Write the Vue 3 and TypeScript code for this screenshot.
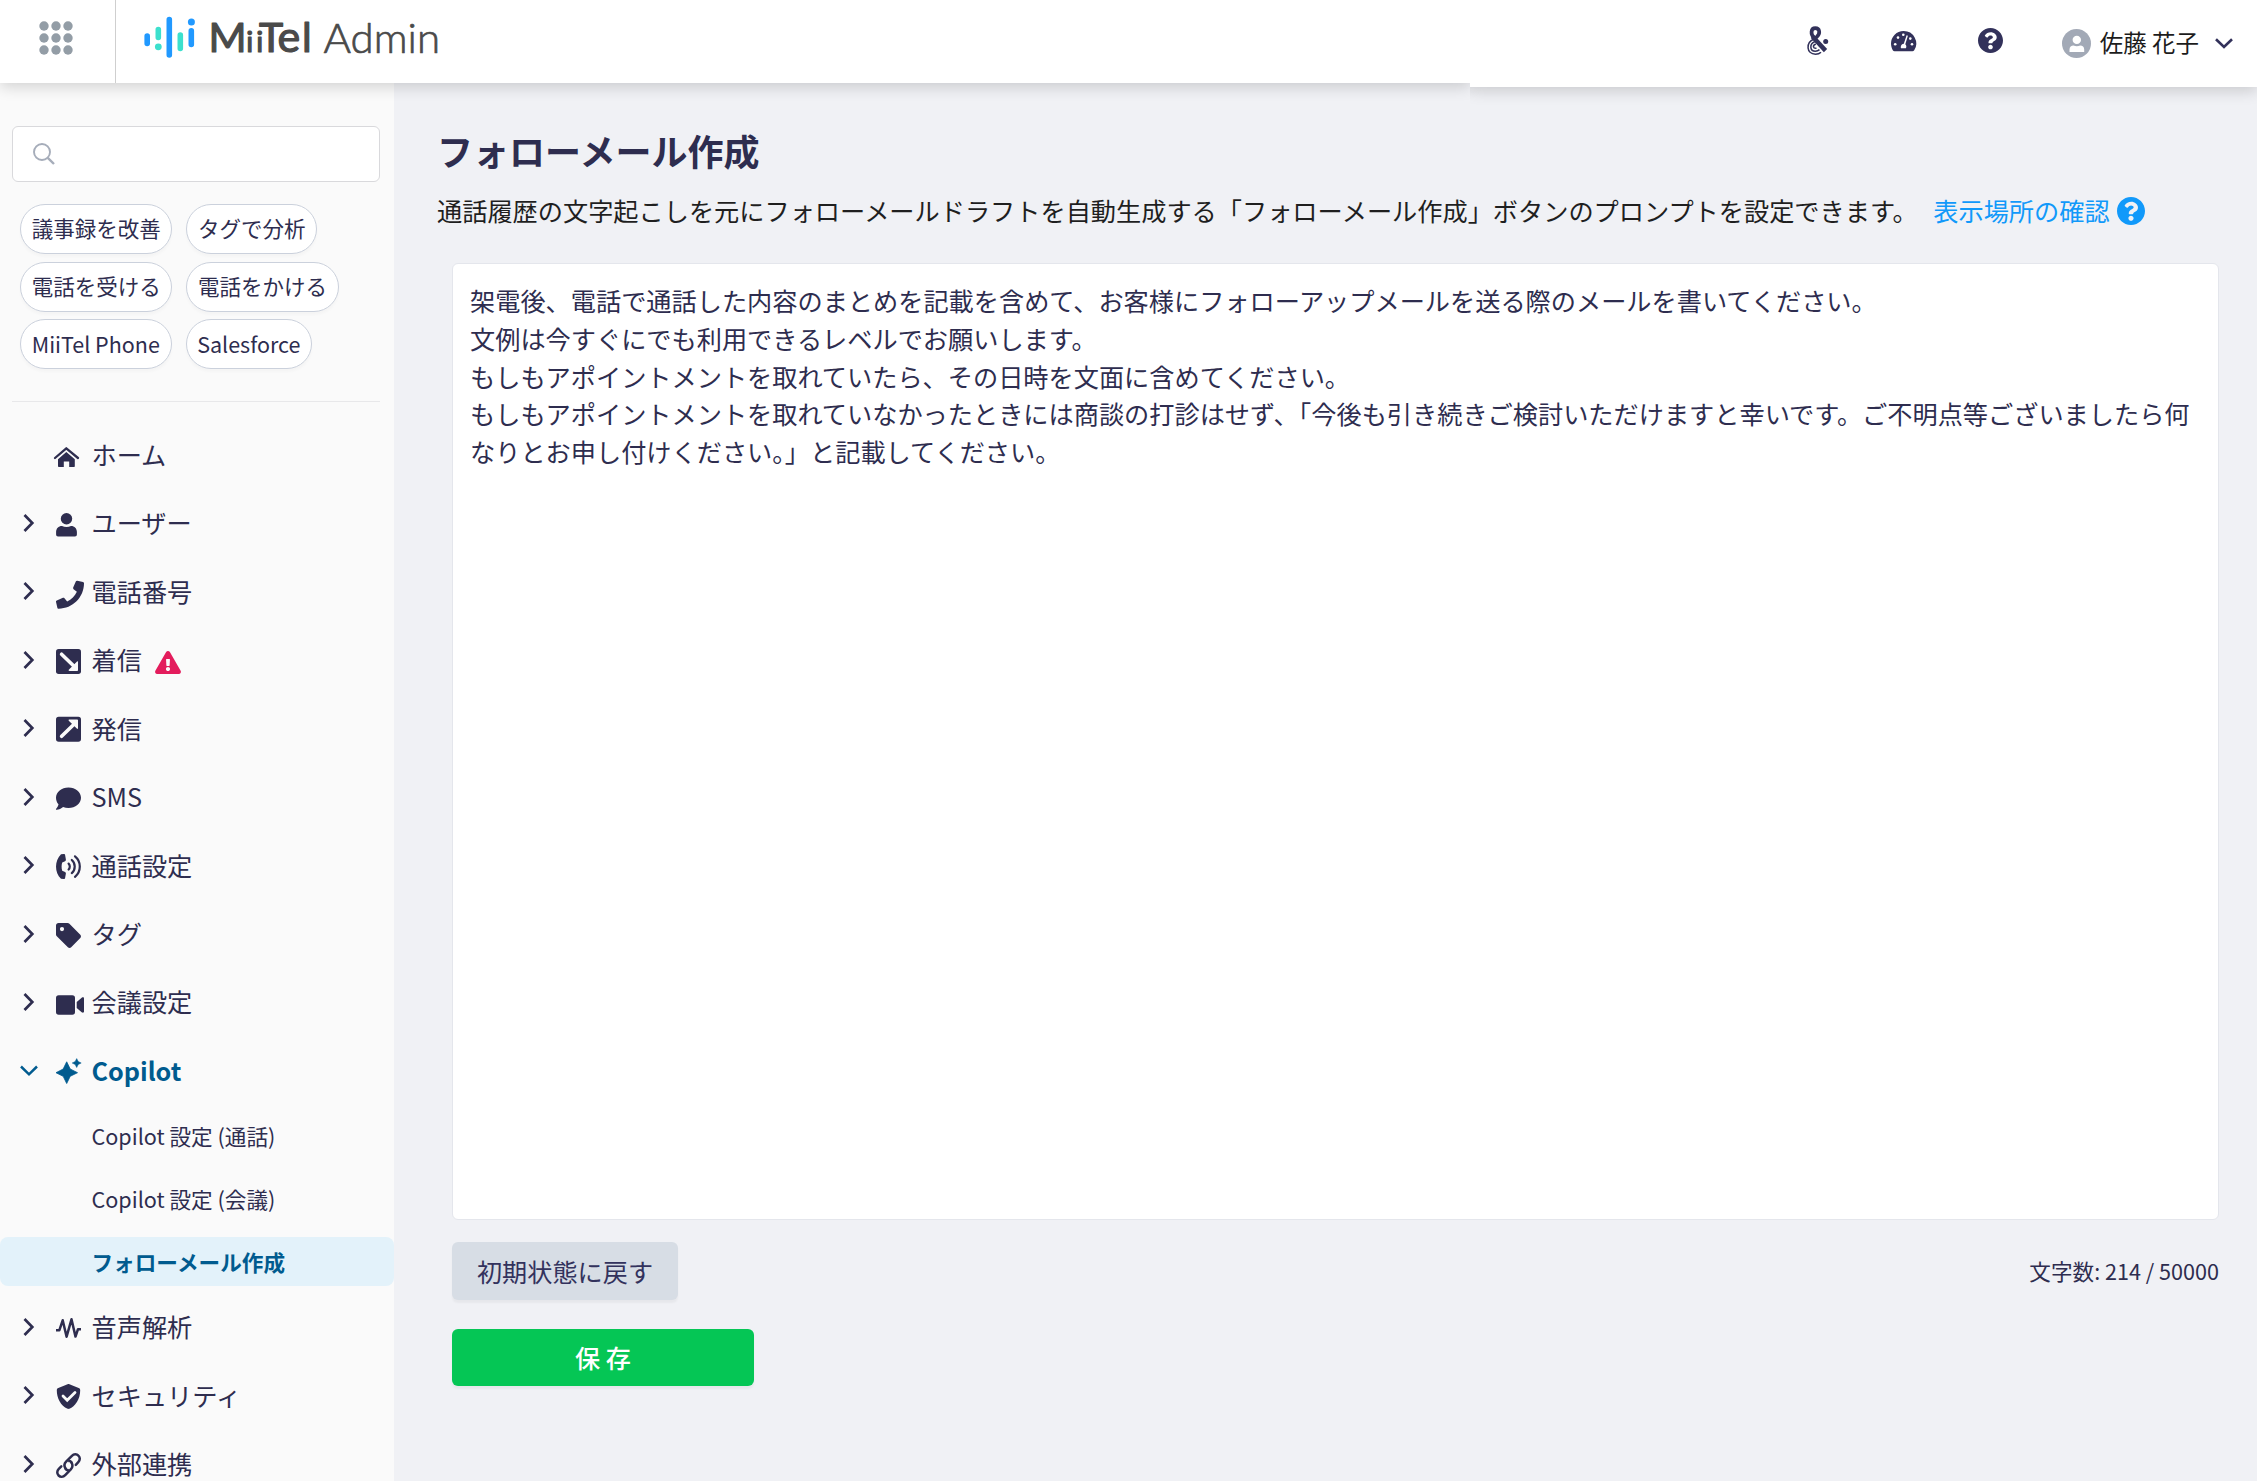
<script setup lang="ts">
import { ref, computed } from 'vue'

interface MenuItem {
  label: string
  icon: string
  leaf?: boolean
  alert?: boolean
  open?: boolean
  children?: string[]
}

const shortcuts: string[][] = [
  ['議事録を改善', 'タグで分析'],
  ['電話を受ける', '電話をかける'],
  ['MiiTel Phone', 'Salesforce'],
]

const menu: MenuItem[] = [
  { label: 'ホーム', icon: 'home', leaf: true },
  { label: 'ユーザー', icon: 'user' },
  { label: '電話番号', icon: 'phone' },
  { label: '着信', icon: 'incoming', alert: true },
  { label: '発信', icon: 'outgoing' },
  { label: 'SMS', icon: 'sms' },
  { label: '通話設定', icon: 'call' },
  { label: 'タグ', icon: 'tag' },
  { label: '会議設定', icon: 'video' },
  {
    label: 'Copilot',
    icon: 'sparkle',
    open: true,
    children: ['Copilot 設定 (通話)', 'Copilot 設定 (会議)', 'フォローメール作成'],
  },
  { label: '音声解析', icon: 'wave' },
  { label: 'セキュリティ', icon: 'shield' },
  { label: '外部連携', icon: 'link' },
]

const activeChild = 'フォローメール作成'
const keyword = ref('')
const maxLength = 50000
const initialPrompt = [
  '架電後、電話で通話した内容のまとめを記載を含めて、お客様にフォローアップメールを送る際のメールを書いてください。',
  '文例は今すぐにでも利用できるレベルでお願いします。',
  'もしもアポイントメントを取れていたら、その日時を文面に含めてください。',
  'もしもアポイントメントを取れていなかったときには商談の打診はせず、「今後も引き続きご検討いただけますと幸いです。ご不明点等ございましたら何なりとお申し付けください。」と記載してください。',
].join('\n')
const prompt = ref(initialPrompt)
const savedLength = ref(214)
const counter = computed(() => `文字数: ${savedLength.value} / ${maxLength}`)

function updateCount() {
  savedLength.value = prompt.value.length
}
function reset() {
  prompt.value = initialPrompt
}

const questionPath =
  'M504 256c0 136.997-111.043 248-248 248S8 392.997 8 256C8 119.083 119.043 8 256 8s248 111.083 248 248zM262.655 90c-54.497 0-89.255 22.957-116.549 63.758-3.536 5.286-2.353 12.415 2.715 16.258l34.699 26.31c5.205 3.947 12.621 3.008 16.665-2.122 17.864-22.658 30.113-35.797 57.303-35.797 20.429 0 45.698 13.148 45.698 32.958 0 14.976-12.363 22.667-32.534 33.976C247.128 238.528 216 254.941 216 296v4c0 6.627 5.373 12 12 12h56c6.627 0 12-5.373 12-12v-1.333c0-28.462 83.186-29.647 83.186-106.667 0-58.002-60.165-102-116.531-102zM256 338c-25.365 0-46 20.635-46 46 0 25.364 20.635 46 46 46s46-20.636 46-46c0-25.364-20.635-46-46-46z'
</script>

<template>
  <div class="app">
    <header class="header">
      <div class="brand">
        <button class="apps" aria-label="apps">
          <svg width="34" height="34" viewBox="0 0 34 34" fill="#939da6">
            <template v-for="r in 3" :key="r">
              <circle v-for="c in 3" :key="c" :cx="12 * c - 7" :cy="12 * r - 7" r="4.7" />
            </template>
          </svg>
        </button>
        <svg class="logo" width="310" height="50" viewBox="0 0 310 50">
          <g stroke-width="5.6" stroke-linecap="round">
            <path d="M7.200 26v7.500M29.300 9.500V45M51.300 20.700v13.800" stroke="#2199ff" />
            <path d="M18.300 19.500v8M40.300 25v13.500" stroke="#3ce0cd" />
          </g>
          <circle cx="51.400" cy="12" r="3.500" fill="#2199ff" />
          <circle cx="18.300" cy="36.800" r="3.400" fill="#3ce0cd" />
          <g font-family="Lato, sans-serif" fill="#4a4a4a" stroke="#4a4a4a" stroke-linejoin="round">
            <text font-size="41" y="42.400" stroke-width="1.200">
              <tspan x="68.500">M</tspan><tspan x="106.200" font-size="29">i</tspan><tspan x="116.200" font-size="29">i</tspan><tspan x="119.100">T</tspan><tspan x="137.500" font-size="43">e</tspan><tspan x="161.900">l</tspan>
            </text>
            <text x="183.500" y="42.500" font-size="41" font-weight="300" stroke-width="0.700" textLength="116.500" lengthAdjust="spacingAndGlyphs">Admin</text>
          </g>
        </svg>
      </div>
      <div class="tools">
        <svg class="amp" width="22" height="30" viewBox="0 0 22 30" fill="none" stroke="#32315a">
          <path d="M7 11.800C3.500 8.500 3.600 2.200 8.300 2.200C12.800 2.200 13.600 7.600 9.800 10.800L6.500 13.600" stroke-width="3.700" />
          <path d="M5.500 10.500L18.500 24.600" stroke-width="4.500" />
          <path d="M7 13C-1.500 16.500-.8 28.200 8.500 28.200C11 28.200 12.800 27.400 14 26.200M8 15.500C1.800 18 3 25.300 8.500 25.200C10.200 25.200 11.500 24.500 12.500 23.600M8.800 18C5.200 19.400 6 22.600 9.500 22.200" stroke-width="1.500" />
          <circle cx="18.700" cy="15.400" r="2.500" fill="#32315a" stroke="none" />
        </svg>
        <svg class="gauge" width="25" height="21" viewBox="0 0 25 21">
          <path d="M12.500 0A12.500 12.500 0 0 0 0 12.500C0 15 .7 17.400 1.800 19.300C2.200 20 2.800 20.300 3.500 20.300H21.500C22.200 20.300 22.800 20 23.200 19.300A12.500 12.500 0 0 0 12.500 0Z" fill="#32315a" />
          <g fill="#fff">
            <circle cx="7" cy="6.600" r="1.300" /><circle cx="12.300" cy="3.700" r="1.300" />
            <circle cx="19.300" cy="7.600" r="1.300" /><circle cx="4.200" cy="13.300" r="1.300" /><circle cx="21" cy="13.300" r="1.300" />
            <path d="M15.600 4.300L16.900 4.700L14.300 13.200C15.600 14.300 15.600 16 14.900 17.300H10.100C9.300 15.500 10.300 12.900 12.800 12.700Z" />
          </g>
        </svg>
        <svg class="help" width="25" height="25" viewBox="8 8 496 496" fill="#32315a"><path :d="questionPath" /></svg>
        <svg class="avatar" width="29" height="29" viewBox="0 0 29 29">
          <circle cx="14.500" cy="14.500" r="14.500" fill="#a2a9b6" />
          <circle cx="14.800" cy="10.900" r="4.200" fill="#fff" />
          <path d="M7.500 22.900V20.500C7.500 18 9.300 16.500 11.500 16.500C13.500 17.500 16.200 17.500 18.200 16.500C20.500 16.500 22.200 18 22.200 20.500V22.900Z" fill="#fff" />
        </svg>
        <span class="name">佐藤 花子</span>
        <svg width="18" height="11" viewBox="0 0 18 11" fill="none" stroke="#32315a" stroke-width="2.600"><path d="M1 1.200L9 9L17 1.200" /></svg>
      </div>
    </header>

    <div class="body">
      <aside class="sidebar">
        <label class="search">
          <svg width="22" height="22" viewBox="0 0 22 22" fill="none" stroke="#a6adba" stroke-width="1.900"><circle cx="9" cy="9" r="8" /><path d="M14.800 14.800L21 21" stroke-width="2.400" /></svg>
          <input v-model="keyword" type="text" aria-label="search" />
        </label>
        <div class="chips">
          <div v-for="(row, i) in shortcuts" :key="i" class="chip-row">
            <button v-for="chip in row" :key="chip" class="chip">{{ chip }}</button>
          </div>
        </div>
        <hr class="rule" />
        <nav>
          <template v-for="item in menu" :key="item.label">
            <div class="item" :class="{ open: item.open }">
              <span class="caret">
                <svg v-if="item.open" width="18" height="12" viewBox="0 0 18 12"><path d="M1 1.500L9 9.300L17 1.500" fill="none" stroke="currentColor" stroke-width="2.500" /></svg>
                <svg v-else-if="!item.leaf" class="right" width="12" height="18" viewBox="0 0 12 18"><path d="M1.500 1L9.300 9L1.500 17" fill="none" stroke="currentColor" stroke-width="2.700" /></svg>
              </span>
              <svg class="icon" width="30" height="28" viewBox="0 0 30 28" fill="currentColor">
                <template v-if="item.icon === 'home'">
                  <path d="M1 17L12.300 7.300L24 17" fill="none" stroke="currentColor" stroke-width="2.300" stroke-linecap="round" stroke-linejoin="round" />
                  <path d="M12.300 11L20.800 18.200V25C20.800 25.600 20.500 26 19.800 26H15.200V20.400H9.800V26H5.200C4.500 26 4 25.600 4 25V18.200Z" />
                </template>
                <template v-else-if="item.icon === 'user'">
                  <circle cx="12.500" cy="8.800" r="5.700" />
                  <path d="M8 15.900C10.700 17.300 14.300 17.300 17 15.900C20.600 15.900 22.900 18.400 22.900 22V24.400C22.900 25.500 22.100 26.400 21 26.400H4C2.900 26.400 2.100 25.500 2.100 24.400V22C2.100 18.400 4.400 15.900 8 15.900Z" />
                </template>
                <g v-else-if="item.icon === 'phone'" transform="translate(2 2.700) scale(.0547)">
                  <path d="M493.400 24.600l-104-24c-11.300-2.600-22.900 3.300-27.500 13.900l-48 112c-4.200 9.800-1.400 21.300 6.900 28l60.600 49.600c-36 76.700-98.900 140.500-177.200 177.200l-49.600-60.600c-6.800-8.300-18.200-11.100-28-6.900l-112 48C3.900 366.500-2 378.100.6 389.400l24 104C27.100 504.200 36.700 512 48 512c256.100 0 464-207.500 464-464 0-11.200-7.700-20.900-18.600-23.400z" />
                </g>
                <template v-else-if="item.icon === 'incoming'">
                  <rect x="2" y="2" width="25" height="25" rx="2.700" />
                  <path d="M7.600 7.200L19.500 18.800" stroke="#fafafa" stroke-width="3.600" stroke-linecap="round" />
                  <path d="M22.800 14.700C23.500 14 24 14.300 24 15.200V23.200C24 23.700 23.700 24 23.200 24H15.500C14.500 24 14.300 23.300 15 22.600Z" fill="#fafafa" />
                </template>
                <template v-else-if="item.icon === 'outgoing'">
                  <rect x="2" y="1.700" width="25" height="25" rx="2.700" />
                  <path d="M7.600 21.300L19.500 9.800" stroke="#fafafa" stroke-width="3.600" stroke-linecap="round" />
                  <path d="M22.800 13.500C23.500 14.200 24 13.900 24 13V5.300C24 4.800 23.700 4.500 23.200 4.500H15.500C14.500 4.500 14.300 5.200 15 5.900Z" fill="#fafafa" />
                </template>
                <path v-else-if="item.icon === 'sms'" d="M14.500 3.500C21.400 3.500 27 8.100 27 13.700C27 19.400 21.400 23.900 14.500 23.900C12.500 23.900 10.700 23.600 9.100 22.900C7.300 24.400 5 25.700 2.500 25.700C1.900 25.700 1.800 25.100 2.200 24.700C3.200 23.600 4.200 22 4.500 20.300C2.900 18.500 2 16.200 2 13.700C2 8.100 7.600 3.500 14.500 3.500Z" />
                <template v-else-if="item.icon === 'call'">
                  <path d="M7 2.200L9.800 2.100C10.500 2.100 11 2.500 11.100 3.100L11.900 7.600C12 8.300 11.700 8.900 11.100 9.200L8.200 10.500C7.400 13 7.400 16.200 8.200 18.700L11.100 20C11.700 20.300 12 20.900 11.900 21.600L11.100 26C11 26.700 10.500 27 9.800 27L7 26.800C.4 20.300.4 8.800 7 2.200Z" />
                  <path d="M14.600 11.600C16.200 13.200 16.200 15.900 14.600 17.500M17.800 8C21.700 11.300 21.700 17.800 17.800 21.100M21 4.300C27.400 9.400 27.400 19.700 21 24.800" fill="none" stroke="currentColor" stroke-width="2.200" stroke-linecap="round" />
                </template>
                <path v-else-if="item.icon === 'tag'" fill-rule="evenodd" d="M2 13.500V4.500C2 3.100 3.100 2 4.500 2H13.500C14.300 2 14.900 2.300 15.400 2.800L26.300 13.700C27.200 14.600 27.200 16.200 26.300 17.100L17.200 26.200C16.300 27.100 14.800 27.100 13.900 26.200L2.800 15.300C2.300 14.800 2 14.200 2 13.500ZM8 6A2.100 2.100 0 1 0 8 10.200A2.100 2.100 0 1 0 8 6Z" />
                <template v-else-if="item.icon === 'video'">
                  <rect x="2" y="6.200" width="19" height="19.500" rx="2.700" />
                  <path d="M22.700 12.900L27.700 8.700C28.800 7.900 30 8.200 30 9.300V22.600C30 23.700 28.800 24 27.700 23.200L22.700 19Z" />
                </template>
                <template v-else-if="item.icon === 'sparkle'">
                  <path d="M12.700 4.800L16.200 12L23.500 15.700L16.200 19.300L12.700 26.500L9.200 19.300L2 15.700L9.200 12Z" stroke="currentColor" stroke-linejoin="round" stroke-width=".8" />
                  <path d="M22.700 1.600L24.200 4.500L27.200 6L24.200 7.500L22.700 10.500L21.200 7.500L18.200 6L21.200 4.500Z" stroke="currentColor" stroke-linejoin="round" stroke-width=".5" />
                </template>
                <path v-else-if="item.icon === 'wave'" d="M2 16.200H5.400L8.700 6.300L12.600 22.700L17.500 5.300L21.500 22.600L24 15.200H27" fill="none" stroke="currentColor" stroke-width="2.500" stroke-linejoin="round" />
                <template v-else-if="item.icon === 'shield'">
                  <path d="M13.600 2.200C14.200 1.900 14.800 1.900 15.400 2.200L24.700 6C25.600 6.400 26.200 7.200 26.200 8.200C26.200 17.300 21 24.400 15.400 26.800C14.800 27 14.200 27 13.600 26.800C6.600 23.900 2.800 15.900 2.800 8.200C2.800 7.200 3.400 6.400 4.300 6Z" />
                  <path d="M9 14L13.200 18.200L21 10.400" fill="none" stroke="#fafafa" stroke-width="2.800" stroke-linecap="round" />
                </template>
                <g v-else fill="none" stroke="currentColor" stroke-width="2.500" stroke-linecap="round">
                  <path d="M17.400 11.400C19 14 18.600 16.600 16.800 18.400L11.200 24.200C9.200 26.200 6.300 26.200 4.600 24.500C2.800 22.700 2.800 19.900 4.800 17.900L7.300 15.300" />
                  <path d="M11.700 17.800C9.900 15.200 10.200 12.600 12.100 10.700L17.900 4.900C19.900 2.900 22.700 2.900 24.400 4.600C26.300 6.400 26.200 9.200 24.300 11.200L21.800 13.800" />
                  <path d="M15.300 10.100C16.500 9.800 17 10.700 17.400 11.400M13.800 19C12.700 19.300 12.100 18.500 11.700 17.800" />
                </g>
              </svg>
              <span class="label">{{ item.label }}</span>
              <svg v-if="item.alert" class="alert" width="26" height="23" viewBox="0 0 576 512"><path fill="#e31c5c" d="M569.517 440.013C587.975 472.007 564.806 512 527.940 512H48.054c-36.937 0-59.999-40.055-41.577-71.987L246.423 23.985c18.467-32.009 64.720-31.951 83.154 0l239.940 416.028zM288 354c-25.405 0-46 20.595-46 46s20.595 46 46 46 46-20.595 46-46-20.595-46-46-46zm-43.673-165.346l7.418 136c.347 6.364 5.609 11.346 11.982 11.346h48.546c6.373 0 11.635-4.982 11.982-11.346l7.418-136c.375-6.874-5.098-12.654-11.982-12.654h-63.383c-6.884 0-12.356 5.780-11.981 12.654z" /></svg>
            </div>
            <div v-if="item.children" class="children">
              <a v-for="child in item.children" :key="child" class="child" :class="{ active: child === activeChild }">{{ child }}</a>
            </div>
          </template>
        </nav>
      </aside>

      <main class="main">
        <h1>フォローメール作成</h1>
        <p class="desc">
          <span>通話履歴の文字起こしを元にフォローメールドラフトを自動生成する「フォローメール作成」ボタンのプロンプトを設定できます。</span>
          <a class="where">表示場所の確認<svg width="28" height="28" viewBox="8 8 496 496" fill="#1199fa"><path :d="questionPath" /></svg></a>
        </p>
        <div class="form">
          <textarea v-model="prompt" class="prompt" spellcheck="false" @input="updateCount"></textarea>
          <div class="meta">
            <button class="reset" @click="reset">初期状態に戻す</button>
            <span class="count">{{ counter }}</span>
          </div>
          <button class="save">保 存</button>
        </div>
      </main>
    </div>
  </div>
</template>

<style>
html,
body {
  margin: 0;
  overflow: hidden;
  background: #f0f1f5;
}
</style>

<style scoped>
.app {
  width: 2257px;
  height: 1481px;
  overflow: hidden;
  display: flex;
  flex-direction: column;
  font-family: 'Noto Sans CJK JP', sans-serif;
  font-size: 25.2px;
  color: #2e2d4f;
  background: #f0f1f5;
}
button,
input,
textarea {
  font-family: inherit;
  box-sizing: border-box;
}
svg {
  display: block;
  flex: none;
  overflow: visible;
}
.header {
  height: 83px;
  flex: none;
  display: flex;
  align-items: flex-start;
  position: relative;
  z-index: 2;
}
.brand {
  width: 1470px;
  height: 83px;
  display: flex;
  background: #fff;
  box-shadow: 0 4px 14px rgba(0, 0, 0, 0.16);
}
.apps {
  width: 116px;
  height: 83px;
  padding: 21px 0 0 39px;
  border: 0;
  border-right: 1px solid #cfcfcf;
  background: none;
  display: flex;
  align-items: flex-start;
}
.logo {
  margin: 10px 0 0 24px;
}
.tools {
  width: 787px;
  height: 87px;
  box-sizing: border-box;
  position: relative;
  padding-right: 24px;
  background: #fff;
  box-shadow: 0 4px 14px rgba(0, 0, 0, 0.16);
  clip-path: inset(0 0 -30px 0);
  display: flex;
  justify-content: flex-end;
  align-items: center;
}
.amp {
  margin: -6px 62px 0 0;
}
.gauge {
  margin: -5px 62px 0 0;
}
.help {
  margin: -6px 59px 0 0;
}
.avatar {
  margin-right: 9px;
}
.name {
  font-size: 23.5px;
  line-height: 36px;
  color: #1c1c1c;
  margin: -3px 16px 0 0;
}
.body {
  flex: 1;
  display: flex;
  min-height: 0;
}
.sidebar {
  width: 394px;
  flex: none;
  background: #fafafa;
  overflow: hidden;
}
.search {
  margin: 43px 14px 0 12px;
  height: 56px;
  box-sizing: border-box;
  border: 1px solid #d9d9dc;
  border-radius: 6px;
  background: #fff;
  display: flex;
  align-items: center;
  padding-left: 20px;
}
.search input {
  flex: 1;
  min-width: 0;
  border: 0;
  outline: 0;
  margin-left: 12px;
  font-size: 21.6px;
}
.chips {
  padding: 22px 0 0 20px;
  display: flex;
  flex-direction: column;
  gap: 7.7px;
}
.chip-row {
  display: flex;
  gap: 14px;
}
.chip {
  height: 50px;
  padding: 0 10.7px 1.5px;
  border: 1px solid #cbd1dc;
  border-radius: 25px;
  background: #fff;
  box-shadow: 0 3px 3px rgba(0, 0, 0, 0.025);
  font-size: 21.5px;
  line-height: 46px;
  color: #2e2d4f;
  white-space: nowrap;
}
.rule {
  margin: 31.4px 14px 0 12px;
  border: 0;
  height: 1px;
  background: #e8e8ea;
}
nav {
  margin-top: 19.5px;
}
.item {
  height: 68.45px;
  display: flex;
  align-items: center;
}
.caret {
  width: 34px;
  padding-left: 20px;
  flex: none;
}
.caret .right {
  margin: -2px 0 0 3px;
}
.label {
  margin: -3px 0 0 7.5px;
  line-height: 38px;
}
.open {
  color: #005b8f;
  font-weight: 700;
}
.alert {
  margin: 3px 0 0 13px;
}
.child {
  display: flex;
  align-items: center;
  height: 49px;
  margin-bottom: 13.8px;
  padding-left: 91.5px;
  font-size: 21.6px;
  border-radius: 8px;
}
.children {
  padding-top: 5.5px;
  margin-bottom: -6px;
}
.active {
  background: #e3f2fa;
  color: #005b8f;
  font-weight: 700;
}
.main {
  flex: 1;
  padding: 40.5px 38px 0 43px;
}
h1 {
  margin: 0;
  font-size: 36px;
  line-height: 52px;
  font-weight: 700;
}
.desc {
  margin: 14px 0 0;
  display: flex;
  align-items: center;
  height: 40px;
  color: #1f1f1f;
  white-space: nowrap;
}
.where {
  display: flex;
  align-items: center;
  gap: 7px;
  margin-left: 15.5px;
  color: #1199fa;
}
.where svg {
  margin-top: 2px;
}
.form {
  padding: 33.5px 0 0 15px;
}
.prompt {
  display: block;
  width: 100%;
  height: 957px;
  padding: 18px 17px;
  border: 1px solid #e4e6ec;
  border-radius: 6px;
  background: #fff;
  color: #2e2d4f;
  font-size: 25.2px;
  line-height: 37.75px;
  resize: none;
  outline: 0;
  overflow: hidden;
}
.meta {
  margin-top: 22px;
  display: flex;
  align-items: center;
  justify-content: space-between;
}
.reset {
  width: 226px;
  height: 58px;
  border: 0;
  border-radius: 6px;
  background: #d7dde5;
  box-shadow: 0 3px 2px rgba(0, 0, 0, 0.04);
  color: #33325d;
  font-size: 25.17px;
  padding: 0 0 1px;
}
.count {
  margin-top: -2px;
  font-size: 21.6px;
}
.save {
  display: block;
  margin-top: 29px;
  width: 302px;
  height: 57px;
  border: 0;
  border-radius: 6px;
  background: #05c655;
  box-shadow: 0 3px 2px rgba(0, 0, 0, 0.04);
  color: #fff;
  font-size: 25.17px;
  font-weight: 500;
  padding: 0 0 1px;
}
</style>
